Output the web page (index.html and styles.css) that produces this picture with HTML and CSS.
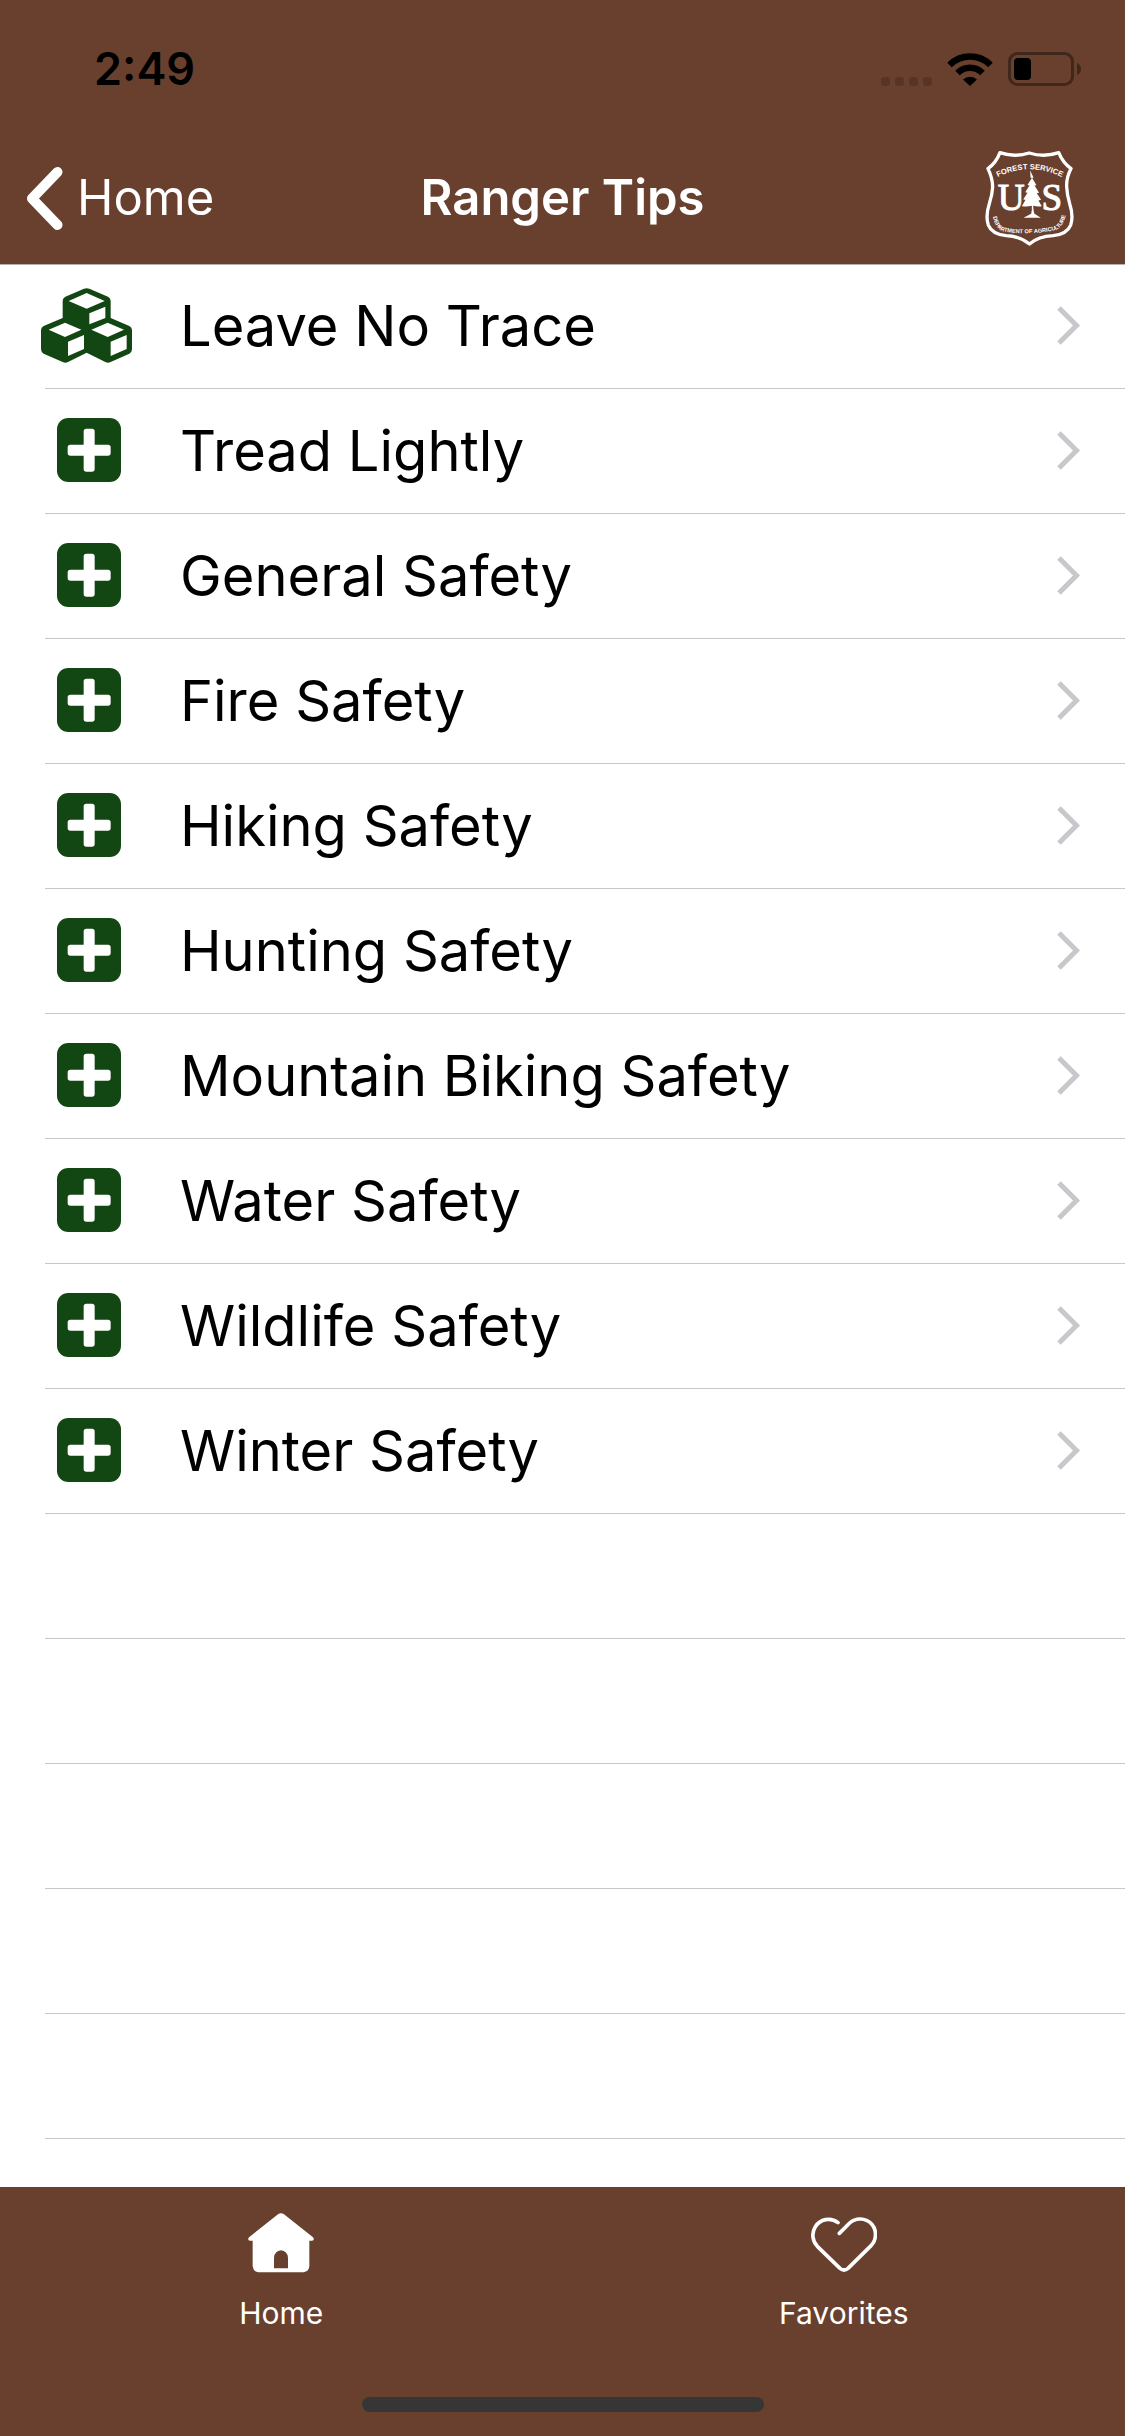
FILE: index.html
```html
<!DOCTYPE html>
<html lang="en">
<head>
  <meta charset="UTF-8">
  <meta name="viewport" content="width=device-width, initial-scale=1">
  <title>Ranger Tips</title>
  <link rel="stylesheet" href="styles.css">
</head>
<body>
  <svg class="sprite" aria-hidden="true">
    <symbol id="plus" viewBox="0 0 192 192">
      <rect width="192" height="192" rx="34" fill="#124612"/>
      <path d="M80 40q0-8 8-8h17q8 0 8 8v40h40q8 0 8 8v17q0 8-8 8h-40v40q0 8-8 8H88q-8 0-8-8v-40H40q-8 0-8-8V88q0-8 8-8h40z" fill="#fff"/>
    </symbol>
    <symbol id="chevron" viewBox="0 0 23 39">
      <path d="M2 2l17.500 17.500L2 37" fill="none" stroke="#c7c7cc" stroke-width="5"/>
    </symbol>
  </svg>

  <header class="header">
    <div class="status-bar">
      <span class="time">2:49</span>
      <div class="status-icons">
        <svg width="51" height="33" viewBox="0 0 51 33" fill="#573526">
          <rect y="24" width="9" height="9" rx="3"/>
          <rect x="14" y="24" width="9" height="9" rx="3"/>
          <rect x="28" y="24" width="9" height="9" rx="3"/>
          <rect x="42" y="24" width="9" height="9" rx="3"/>
        </svg>
        <svg width="46" height="33" viewBox="0 0 46 33">
          <path d="M2.500 12a29 29 0 0 1 41 0M10.500 20a17.500 17.500 0 0 1 25 0" fill="none" stroke="#000" stroke-width="6.500"/>
          <path d="M16 26.500a10 10 0 0 1 14 0l-7 6.500z"/>
        </svg>
        <svg width="73" height="34" viewBox="0 0 73 34">
          <rect x="1.500" y="1.500" width="63" height="31" rx="8" fill="none" stroke="#40271c" stroke-width="3"/>
          <rect x="6" y="6" width="17" height="22" rx="4"/>
          <path d="M69 11q4 2 4 6t-4 6z" fill="#40271c"/>
        </svg>
      </div>
    </div>
    <nav class="nav-bar">
      <a class="back" href="#home">
        <svg width="37" height="63" viewBox="0 0 37 63">
          <path d="M31.500 5L6 31.500 31.500 58" fill="none" stroke="#fff" stroke-width="10" stroke-linecap="round" stroke-linejoin="round"/>
        </svg>
        Home
      </a>
      <h1>Ranger Tips</h1>
      <svg class="logo" viewBox="44 28 266 292" role="img" aria-label="Forest Service, Department of Agriculture">
        <path d="M88 36Q130 51 176 37Q222 51 265 36Q277 66 302 84Q287 113 289 140Q290 162 298 190Q310 227 301 254Q290 281 248 286Q204 288 177 311Q151 288 107 286Q64 281 53 254Q44 227 56 190Q65 162 66 140Q66 113 52 84Q77 66 88 36Z" fill="none" stroke="#fff" stroke-width="10" stroke-linejoin="round"/>
        <path id="arc-top" d="M80 110Q177 62 276 110" fill="none"/>
        <path id="arc-bottom" d="M65 212Q69 262 96 272Q126 280 177 278Q229 277 260 267Q284 254 288 208" fill="none"/>
        <g class="logo-text">
          <text font-size="23"><textPath href="#arc-top" startOffset="50%" text-anchor="middle">FOREST SERVICE</textPath></text>
          <text font-size="17"><textPath href="#arc-bottom" startOffset="50%" text-anchor="middle">DEPARTMENT OF AGRICULTURE</textPath></text>
          <text class="serif" x="122" y="208" font-size="112" text-anchor="middle">U</text>
          <text class="serif" x="244" y="208" font-size="112" text-anchor="middle">S</text>
        </g>
        <path d="M179 90l10 21-4 1 13 22-6 1 14 22-7 1 13 20-8 2 10 17q-12 2-26-1 1 18 4 24l19 12h-52l23-12q3-8 2-24-16 4-30 1l11-19-7-1 13-20-7-2 13-20-6-2 13-21-4-1z" fill="#fff" stroke="#69402e" stroke-width="5" paint-order="stroke"/>
      </svg>
    </nav>
  </header>

  <main>
    <ul class="tips">
      <li><a href="#leave-no-trace">
        <span class="icon">
          <svg width="95" height="75" viewBox="0 0 285 225">
            <path d="M65 38Q65 30 73 26L129 2Q137-1 145 2L201 26Q209 30 209 38V90L265 114Q273 118 273 126V184Q273 192 265 197L209 222Q201 226 193 222L137 194 81 222Q73 226 65 222L8 197Q0 192 0 184V126Q0 118 8 114L65 90Z" fill="#124612"/>
            <path d="M83 39l54-24 54 24-54 23zM145 76l48-20v34l-48 19zM23 125l49-21 49 21-49 22zM81 161l48-20v42l-48 21zM151 125l49-21 49 21-49 22zM209 161l48-20v42l-48 21z" fill="#fff"/>
          </svg>
        </span>
        <span class="label">Leave No Trace</span>
        <svg class="chevron"><use href="#chevron"/></svg>
      </a></li>
      <li><a href="#tread-lightly">
        <span class="icon"><svg class="plus"><use href="#plus"/></svg></span>
        <span class="label">Tread Lightly</span>
        <svg class="chevron"><use href="#chevron"/></svg>
      </a></li>
      <li><a href="#general-safety">
        <span class="icon"><svg class="plus"><use href="#plus"/></svg></span>
        <span class="label">General Safety</span>
        <svg class="chevron"><use href="#chevron"/></svg>
      </a></li>
      <li><a href="#fire-safety">
        <span class="icon"><svg class="plus"><use href="#plus"/></svg></span>
        <span class="label">Fire Safety</span>
        <svg class="chevron"><use href="#chevron"/></svg>
      </a></li>
      <li><a href="#hiking-safety">
        <span class="icon"><svg class="plus"><use href="#plus"/></svg></span>
        <span class="label">Hiking Safety</span>
        <svg class="chevron"><use href="#chevron"/></svg>
      </a></li>
      <li><a href="#hunting-safety">
        <span class="icon"><svg class="plus"><use href="#plus"/></svg></span>
        <span class="label">Hunting Safety</span>
        <svg class="chevron"><use href="#chevron"/></svg>
      </a></li>
      <li><a href="#mountain-biking-safety">
        <span class="icon"><svg class="plus"><use href="#plus"/></svg></span>
        <span class="label">Mountain Biking Safety</span>
        <svg class="chevron"><use href="#chevron"/></svg>
      </a></li>
      <li><a href="#water-safety">
        <span class="icon"><svg class="plus"><use href="#plus"/></svg></span>
        <span class="label">Water Safety</span>
        <svg class="chevron"><use href="#chevron"/></svg>
      </a></li>
      <li><a href="#wildlife-safety">
        <span class="icon"><svg class="plus"><use href="#plus"/></svg></span>
        <span class="label">Wildlife Safety</span>
        <svg class="chevron"><use href="#chevron"/></svg>
      </a></li>
      <li><a href="#winter-safety">
        <span class="icon"><svg class="plus"><use href="#plus"/></svg></span>
        <span class="label">Winter Safety</span>
        <svg class="chevron"><use href="#chevron"/></svg>
      </a></li>
      <li aria-hidden="true"></li>
      <li aria-hidden="true"></li>
      <li aria-hidden="true"></li>
      <li aria-hidden="true"></li>
      <li aria-hidden="true"></li>
    </ul>
  </main>

  <footer class="footer">
    <nav class="tabs">
      <a href="#home">
        <svg width="66" height="60" viewBox="0 0 198 180">
          <path d="M90 4q9-6 18 0l87 69q6 8-3 10h-8v77q-2 16-17 18H31q-15-2-17-18V83H6q-9-2-3-10zM78 166h42v-32q-2-20-21-22-19 2-21 22z" fill="#fff" fill-rule="evenodd"/>
        </svg>
        Home
      </a>
      <a href="#favorites">
        <svg width="66" height="60" viewBox="0 0 198 180">
          <path d="M81 29C58 11 27 19 13 41 1 60 4 84 19 100L87 166q12 10 24 0L181 97C198 79 197 50 182 33 163 13 133 14 116 30L85 61" fill="none" stroke="#fff" stroke-width="11" stroke-linecap="round" stroke-linejoin="round"/>
        </svg>
        Favorites
      </a>
    </nav>
    <div class="home-indicator"></div>
  </footer>
</body>
</html>
```

FILE: styles.css
```css
* { box-sizing: border-box; }
body { margin: 0; min-height: 100vh; display: flex; flex-direction: column; background: #fff; color: #000; font-family: Inter, "Liberation Sans", sans-serif; }
a { color: inherit; text-decoration: none; }
svg { display: block; flex: none; }
.sprite { position: absolute; width: 0; height: 0; }

.header { background: #69402e; box-shadow: 0 1px 0 #b2b2b2; z-index: 1; }
.status-bar { display: flex; justify-content: space-between; align-items: center; height: 132px; padding: 6px 44px 0 94px; }
.time { font-size: 45px; font-weight: 600; line-height: 54px; }
.status-icons { display: flex; align-items: center; gap: 15px; }
.nav-bar { display: grid; grid-template-columns: 1fr auto 1fr; align-items: center; height: 132px; padding: 0 26px; color: #fff; font-size: 49px; line-height: 60px; }
.nav-bar h1 { margin: 0; font-size: 49px; font-weight: 600; }
.back { display: flex; align-items: center; gap: 14px; }
.logo { justify-self: end; width: 89px; height: 97px; margin-right: 25px; }
.logo-text { fill: #fff; font-family: "Liberation Sans", sans-serif; font-weight: 700; }
.logo-text .serif { font-family: "Liberation Serif", serif; font-weight: 400; stroke: #fff; stroke-width: 3px; }

main { flex: 1; }
.tips { list-style: none; margin: 0; padding: 0 0 0 45px; }
.tips li { height: 125px; border-bottom: 1px solid #c8c7cc; }
.tips a { display: flex; align-items: center; height: 100%; padding: 0 45px 2px 0; }
.icon { display: flex; justify-content: center; width: 87px; margin-right: 48px; }
.plus { width: 64px; height: 64px; }
.label { flex: 1; padding-top: 2px; font-size: 56px; line-height: 72px; }
.chevron { width: 23px; height: 39px; }

.footer { display: flex; flex-direction: column; justify-content: space-between; align-items: center; height: 249px; padding: 26px 0 24px; background: #69402e; color: #fff; }
.tabs { display: flex; width: 100%; }
.tabs a { flex: 1; display: flex; flex-direction: column; align-items: center; gap: 22px; font-size: 30px; line-height: 36px; }
.home-indicator { width: 402px; height: 15px; border-radius: 8px; background: #363636; }
```
